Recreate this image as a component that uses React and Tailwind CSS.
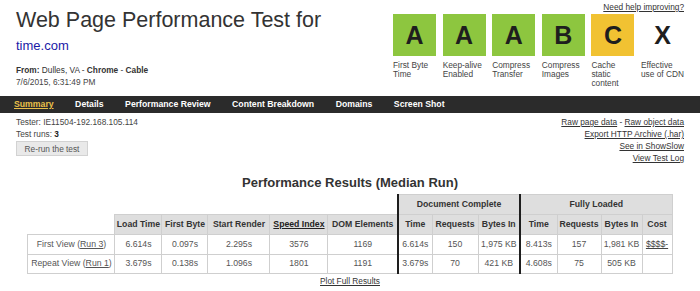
import React from "react";

const grades = [
  { g: "A", bg: "bg-[#8dc63f]", label: ["First Byte", "Time"] },
  { g: "A", bg: "bg-[#8dc63f]", label: ["Keep-alive", "Enabled"] },
  { g: "A", bg: "bg-[#8dc63f]", label: ["Compress", "Transfer"] },
  { g: "B", bg: "bg-[#8dc63f]", label: ["Compress", "Images"] },
  { g: "C", bg: "bg-[#f1c232]", label: ["Cache", "static", "content"] },
  { g: "X", bg: "bg-white", label: ["Effective", "use of CDN"] },
];

const nav = ["Summary", "Details", "Performance Review", "Content Breakdown", "Domains", "Screen Shot"];

const th = "border border-[#cfcfcf] bg-[#dedede] font-bold text-[#333] text-center p-0";
const td = "border border-[#cfcfcf] text-[#555] text-center p-0";
const thick = "border-l-2 border-l-[#1e1e1e]";

export default function App() {
  return (
    <div className="w-[700px] h-[291px] bg-white overflow-hidden font-['Liberation_Sans',Arial,sans-serif] text-[#333]">
      {/* header */}
      <div className="h-[96px] flex justify-between pl-4 pr-4">
        <div>
          <div className="pt-[10px] text-[21.5px] leading-[21px] text-[#333]">Web Page Performance Test for</div>
          <div className="mt-[8px] text-[13px] leading-[13px] text-[#1a1aa6]">time.com</div>
          <div className="mt-[12px] text-[8.3px] leading-[12px] text-[#333]">
            <b>From:</b> Dulles, VA - <b>Chrome</b> - <b>Cable</b>
          </div>
          <div className="text-[8.3px] leading-[12px] text-[#444]">7/6/2015, 6:31:49 PM</div>
        </div>
        <div className="flex flex-col items-end">
          <div className="pt-[1px] text-[8.3px] leading-[12px] underline text-[#333]">Need help improving?</div>
          <div className="mt-[1px] flex gap-[6.6px]">
            {grades.map((x, i) => (
              <div key={i} className="w-[43px]">
                <div className={`h-[42px] ${x.bg} flex items-center justify-center text-[25px] font-bold text-[#1e1e1e] leading-none`}>
                  {x.g}
                </div>
                <div className="mt-[4.5px] text-[8.3px] leading-[9.3px] text-[#444] whitespace-nowrap">
                  {x.label.map((l, j) => (
                    <div key={j}>{l}</div>
                  ))}
                </div>
              </div>
            ))}
          </div>
        </div>
      </div>

      {/* nav */}
      <div className="h-[17px] bg-[#2b2b2b] flex items-center pl-[14px] gap-[21.5px] text-[8.7px] font-bold text-white">
        {nav.map((n, i) => (
          <span key={n} className={i === 0 ? "text-[#e9c04a] underline" : ""}>
            {n}
          </span>
        ))}
      </div>

      {/* info */}
      <div className="flex justify-between px-4 pt-[3px] text-[8.3px] leading-[12px]">
        <div className="text-[#444]">
          <div>Tester: IE11504-192.168.105.114</div>
          <div>
            Test runs: <b className="text-[#222]">3</b>
          </div>
          <div className="mt-[1px] w-[72px] h-[15px] bg-[#e9e9e9] border border-[#d2d2d2] flex items-center justify-center text-[#555]">
            Re-run the test
          </div>
        </div>
        <div className="flex flex-col items-end text-[#333]">
          <div>
            <span className="underline">Raw page data</span> - <span className="underline">Raw object data</span>
          </div>
          <div className="underline">Export HTTP Archive (.har)</div>
          <div className="underline">See in ShowSlow</div>
          <div className="underline">View Test Log</div>
        </div>
      </div>

      {/* results title */}
      <div className="mt-[12px] text-center text-[13px] leading-[13px] font-bold text-[#333]">
        Performance Results (Median Run)
      </div>

      {/* table */}
      <div className="mt-[5px] flex justify-center">
        <table className="table-fixed border-collapse text-[8.7px] leading-none w-[644px]">
          <colgroup>
            <col className="w-[87px]" />
            <col className="w-[47px]" />
            <col className="w-[46px]" />
            <col className="w-[62px]" />
            <col className="w-[58px]" />
            <col className="w-[70px]" />
            <col className="w-[34px]" />
            <col className="w-[46px]" />
            <col className="w-[42px]" />
            <col className="w-[37px]" />
            <col className="w-[44px]" />
            <col className="w-[41px]" />
            <col className="w-[30px]" />
          </colgroup>
          <thead>
            <tr className="h-[20px]">
              <th colSpan={6} className="p-0"></th>
              <th colSpan={3} className={`${th} ${thick}`}>Document Complete</th>
              <th colSpan={4} className={`${th} ${thick}`}>Fully Loaded</th>
            </tr>
            <tr className="h-[20px]">
              <th className="p-0"></th>
              <th className={th}>Load Time</th>
              <th className={th}>First Byte</th>
              <th className={th}>Start Render</th>
              <th className={th}>
                <span className="underline text-[#222]">Speed Index</span>
              </th>
              <th className={th}>DOM Elements</th>
              <th className={`${th} ${thick}`}>Time</th>
              <th className={th}>Requests</th>
              <th className={th}>Bytes In</th>
              <th className={`${th} ${thick}`}>Time</th>
              <th className={th}>Requests</th>
              <th className={th}>Bytes In</th>
              <th className={th}>Cost</th>
            </tr>
          </thead>
          <tbody>
            <tr className="h-[19.5px]">
              <td className={td}>
                First View (<span className="underline">Run 3</span>)
              </td>
              <td className={td}>6.614s</td>
              <td className={td}>0.097s</td>
              <td className={td}>2.295s</td>
              <td className={td}>3576</td>
              <td className={td}>1169</td>
              <td className={`${td} ${thick}`}>6.614s</td>
              <td className={td}>150</td>
              <td className={td}>1,975 KB</td>
              <td className={`${td} ${thick}`}>8.413s</td>
              <td className={td}>157</td>
              <td className={td}>1,981 KB</td>
              <td className={td}>
                <span className="underline text-[#444]">$$$$-</span>
              </td>
            </tr>
            <tr className="h-[19.5px]">
              <td className={td}>
                Repeat View (<span className="underline">Run 1</span>)
              </td>
              <td className={td}>3.679s</td>
              <td className={td}>0.138s</td>
              <td className={td}>1.096s</td>
              <td className={td}>1801</td>
              <td className={td}>1191</td>
              <td className={`${td} ${thick}`}>3.679s</td>
              <td className={td}>70</td>
              <td className={td}>421 KB</td>
              <td className={`${td} ${thick}`}>4.608s</td>
              <td className={td}>75</td>
              <td className={td}>505 KB</td>
              <td className={td}></td>
            </tr>
          </tbody>
        </table>
      </div>

      <div className="mt-[1px] text-center text-[8.3px] leading-[12px] underline text-[#333]">Plot Full Results</div>
    </div>
  );
}
